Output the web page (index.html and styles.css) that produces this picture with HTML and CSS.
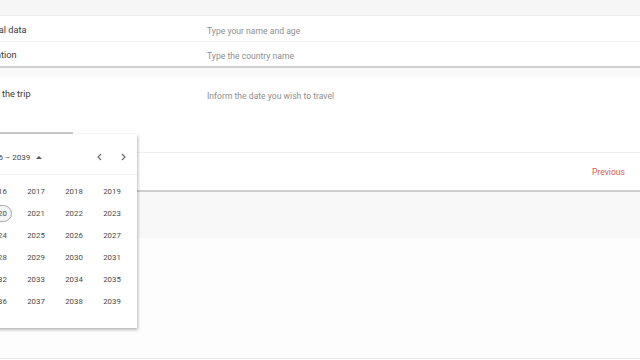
FILE: index.html
```html
<!DOCTYPE html>
<html>
<head>
<meta charset="utf-8">
<link rel="stylesheet" href="styles.css">
</head>
<body>
<div class="page">
  <div class="topbar"></div>
  <div class="accordion">
    <div class="panel">
      <div class="panel-header row-first">
        <span class="title">Personal data</span>
        <span class="desc">Type your name and age</span>
      </div>
      <div class="panel-header row-second">
        <span class="title">Destination</span>
        <span class="desc">Type the country name</span>
      </div>
    </div>
    <div class="gap"></div>
    <div class="panel expanded">
      <div class="panel-header row-third">
        <span class="title">Date of the trip</span>
        <span class="desc">Inform the date you wish to travel</span>
      </div>
      <div class="panel-body">
        <div class="field"><div class="underline"></div></div>
        <div class="calendar">
          <div class="cal-header">
            <span class="period">2016 – 2039 <span class="caret"></span></span>
            <span class="navs">
              <svg width="10" height="10" viewBox="0 0 10 10"><path d="M6 2 L3 5 L6 8" fill="none" stroke="#666" stroke-width="1.1"/></svg>
              <svg width="10" height="10" viewBox="0 0 10 10"><path d="M4 2 L7 5 L4 8" fill="none" stroke="#666" stroke-width="1.1"/></svg>
            </span>
          </div>
          <div class="years">
            <span>2016</span><span>2017</span><span>2018</span><span>2019</span>
            <span><i class="today">2020</i></span><span>2021</span><span>2022</span><span>2023</span>
            <span>2024</span><span>2025</span><span>2026</span><span>2027</span>
            <span>2028</span><span>2029</span><span>2030</span><span>2031</span>
            <span>2032</span><span>2033</span><span>2034</span><span>2035</span>
            <span>2036</span><span>2037</span><span>2038</span><span>2039</span>
          </div>
        </div>
      </div>
      <div class="actions"><span class="prev">Previous</span></div>
    </div>
    <div class="next-band"></div>
    <div class="rest"></div>
  </div>
</div>
</body>
</html>
```
FILE: styles.css
```css
html, body {
  margin: 0;
  padding: 0;
  background: #fff;
  font-family: Roboto, "Liberation Sans", sans-serif;
  overflow: hidden;
}
.page {
  width: 640px;
  height: 360px;
  overflow: hidden;
  position: relative;
}
.topbar {
  height: 16px;
  background: #f6f6f6;
  border-bottom: 1px solid #ececec;
  box-sizing: border-box;
}
.accordion {
  margin-left: -30px;
  width: 670px;
}
.panel {
  background: #fff;
}
.panel-header {
  display: flex;
  align-items: center;
  box-sizing: border-box;
}
.row-first {
  height: 26px;
  border-bottom: 1px solid #f0f0f0;
  padding-top: 1px;
}
.row-second {
  height: 26px;
  border-bottom: 2px solid #cfcfcf;
}
.row-third {
  height: 36px;
  align-items: flex-start;
  padding-top: 11px;
}
.title {
  width: 237px;
  font-size: 9.2px;
  color: #3a3a3a;
  flex: none;
}
.desc {
  font-size: 8.6px;
  color: #8e8e8e;
  padding-top: 3px;
}
.gap {
  height: 9px;
  background: #fafafa;
}
.expanded {
  border-bottom: 2px solid #cfcfcf;
}
.panel-body {
  position: relative;
  height: 39px;
}
.field {
  padding-top: 19px;
}
.underline {
  width: 103px;
  height: 2px;
  background: #c9c9c9;
}
.calendar {
  position: absolute;
  left: 3px;
  top: 21px;
  width: 164px;
  height: 194px;
  background: #fff;
  box-shadow: 1px 2px 3px rgba(0,0,0,0.25), 0 0 2px rgba(0,0,0,0.08);
  z-index: 5;
  box-sizing: border-box;
}
.cal-header {
  height: 41px;
  display: flex;
  align-items: center;
  justify-content: space-between;
  padding: 6px 9px 0 12px;
  border-bottom: 1px solid #f0f0f0;
  box-sizing: border-box;
}
.period {
  font-size: 8px;
  color: #444;
  display: flex;
  align-items: center;
  gap: 4px;
}
.caret {
  width: 0;
  height: 0;
  border-left: 3px solid transparent;
  border-right: 3px solid transparent;
  border-bottom: 3px solid #555;
  margin-left: 2px;
}
.navs {
  display: flex;
  gap: 13px;
}
.years {
  display: grid;
  grid-template-columns: repeat(4, 38px);
  grid-auto-rows: 22px;
  padding: 5px 0 0 6px;
}
.years span {
  display: flex;
  align-items: center;
  justify-content: center;
  font-size: 7.8px;
  color: #4a4a4a;
}
.today {
  font-style: normal;
  display: flex;
  align-items: center;
  justify-content: center;
  width: 28px;
  height: 17px;
  border: 1px solid #a8a8a8;
  border-radius: 9px;
  background: #f4f4f4;
  box-sizing: border-box;
}
.actions {
  height: 37px;
  border-top: 1px solid #efefef;
  display: flex;
  align-items: center;
  justify-content: flex-end;
  padding-right: 15px;
}
.prev {
  font-size: 8.6px;
  color: #e0584f;
}
.next-band {
  height: 46px;
  background: #f8f8f8;
}
.rest {
  height: 120px;
  border-bottom: 1px solid #e6e6e6;
  background: #fdfdfd;
}
```
